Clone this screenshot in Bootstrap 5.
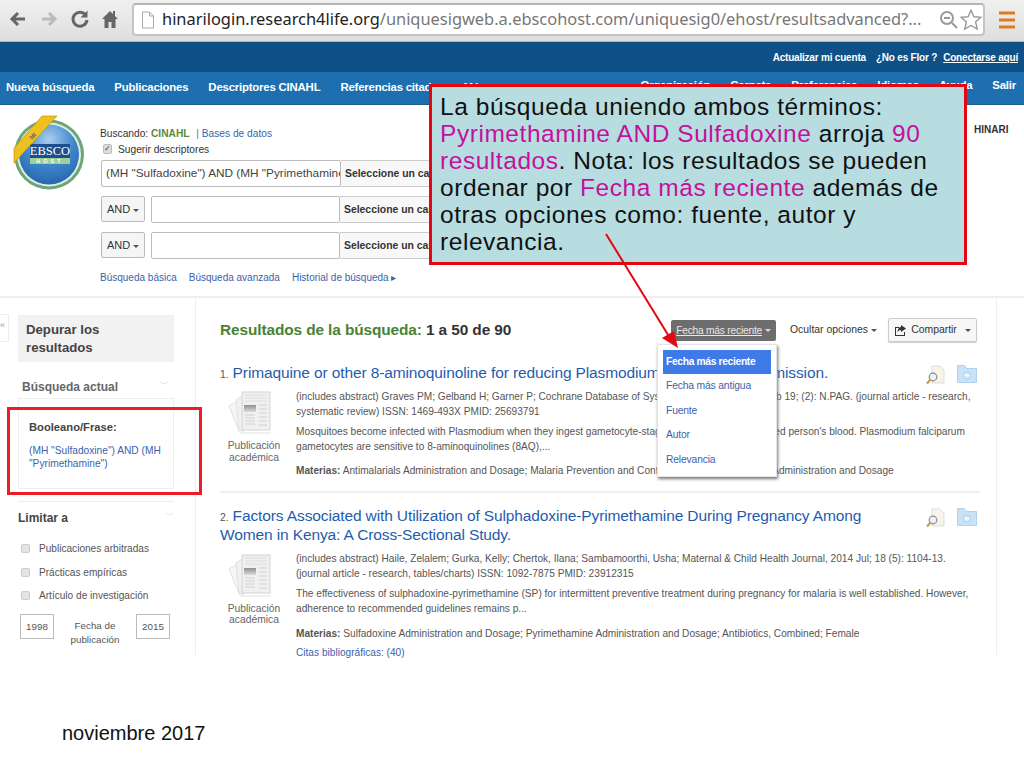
<!DOCTYPE html>
<html lang="es">
<head>
    <meta charset="UTF-8">
    <meta name="viewport" content="width=device-width, initial-scale=1.0">
    <title>Resultados de la búsqueda</title>
    <link href="https://cdn.jsdelivr.net/npm/bootstrap@5.3.0/dist/css/bootstrap.min.css" rel="stylesheet">
    <style>
        body {
            width: 1024px;
            height: 768px;
            overflow: hidden;
            background: #fff;
            font-family: "Liberation Sans", Arial, sans-serif;
            position: relative;
            color: #333;
        }

        /* browser bar */
        .chrome-bar {
            height: 42px;
            background: linear-gradient(#f0f0f0, #dedede);
            border-bottom: 1px solid #b5b5b5;
            padding: 3px 0 0 8px;
        }
        .chrome-btn { width: 31px; height: 32px; }
        .url-box {
            width: 853px;
            height: 33px;
            background: #fff;
            border: 2px solid #c4c4c4;
            border-top-color: #b5b5b5;
            border-radius: 4px;
            padding-left: 7px;
            font-family: "Noto Sans", sans-serif;
            font-size: 16.4px;
            color: #777;
            white-space: nowrap;
        }
        .url-box b { font-weight: 400; color: #222; }
        .url-text { margin-left: 7px; flex: 1; overflow: hidden; }
        .burger { margin: 8px 0 0 14px; }

        /* blue bars */
        .band-top {
            height: 30px;
            background: #0f5186;
            color: #fff;
            font-size: 10px;
            font-weight: 700;
            padding-right: 6px;
            letter-spacing: -.2px;
        }
        .band-top u { margin-left: 6px; }
        .band-top span { margin-right: 10px; }
        .band-nav {
            height: 33px;
            background: #1d6fb0;
            color: #fff;
            font-size: 11.4px;
            font-weight: 700;
            padding: 0 8px 0 6px;
            border-bottom: 1px solid #18608e;
            letter-spacing: -.2px;
        }
        .band-nav span { margin-right: 20px; }
        .nav-end { margin-left: auto; padding-bottom: 5px; }
        .band-nav .nav-end span { margin: 0 0 0 20px; }

        /* search block */
        .search-block {
            height: 193px;
            border-bottom: 2px solid #eee;
            padding: 8px 0 0 12px;
            font-size: 10.2px;
        }
        .logo-col { width: 88px; flex: none; }
        .form-col { padding-top: 13px; }
        .blue-link { color: #3c5fae; }
        .green-txt { color: #5b8a3a; font-weight: 700; }
        .suggest { margin: 0 0 3px 3px; height: 16px; }
        .mini-check {
            width: 9px;
            height: 10px;
            background: #ddd;
            border: 1px solid #bbb;
            border-radius: 2px;
            margin-right: 6px;
            flex: none;
            font-size: 8px;
            line-height: 8px;
            text-align: center;
        }
        .search-row { margin-left: 1px; }
        .row-gap { margin-top: 9px; }
        .search-input {
            height: 27px;
            border: 1px solid #bbb;
            background: #fff;
            font-size: 11.8px;
            white-space: nowrap;
            overflow: hidden;
            line-height: 25px;
            color: #444;
            border-radius: 2px;
        }
        .field-select {
            width: 170px;
            height: 27px;
            border: 1px solid #ccc;
            border-left: 0;
            background: #f8f8f8;
            font-weight: 700;
            font-size: 10.4px;
            line-height: 25px;
            padding-left: 4px;
            white-space: nowrap;
            overflow: hidden;
        }
        .and-btn {
            width: 44px;
            height: 26px;
            border: 1px solid #bbb;
            border-radius: 2px;
            background: #f5f5f5;
            font-size: 11px;
            line-height: 24px;
            padding-left: 5px;
            margin-right: 6px;
            flex: none;
        }
        .caret-down {
            display: inline-block;
            border-left: 3px solid transparent;
            border-right: 3px solid transparent;
            border-top: 3px solid #555;
            vertical-align: middle;
            margin-left: 3px;
        }
        .search-links { margin-top: 11px; gap: 12px; font-size: 10px; }
        .hinari-tag {
            position: absolute;
            left: 974px;
            top: 122px;
            font-size: 10px;
            font-weight: 700;
        }

        /* results */
        .results-wrap { height: 357px; }
        .side-col {
            width: 196px;
            flex: none;
            border-right: 1px solid #eee;
            padding: 17px 21px 0 18px;
            position: relative;
            font-size: 10.1px;
        }
        .collapse-tab {
            position: absolute;
            left: -1px;
            top: 16px;
            width: 10px;
            height: 28px;
            border: 1px solid #eee;
            font-size: 9px;
            color: #999;
            line-height: 20px;
        }
        .refine-head {
            background: #f2f2f2;
            height: 47px;
            font-size: 13.2px;
            line-height: 18px;
            font-weight: 700;
            padding: 6px 0 0 8px;
            color: #444;
        }
        .side-title { font-size: 12px; font-weight: 700; color: #666; }
        .side-current { padding: 16px 5px 0 4px; }
        .chev { color: #bbb; font-size: 9px; }
        .bool-box {
            border: 1px solid #eee;
            height: 91px;
            margin-top: 2px;
            padding: 22px 0 0 10px;
            font-size: 10.2px;
            line-height: 13px;
        }
        .bool-box strong { display: block; font-size: 11.2px; margin-bottom: 10px; color: #444; }
        .limit-box { border-top: 1px solid #eee; margin-top: 12px; padding-top: 7px; }
        .limit-box .side-title { color: #444; }
        .limit-item { margin-top: 8.6px; height: 15px; color: #555; }
        .limit-box .limit-first { margin-top: 14px; }
        .limit-item i {
            width: 9px;
            height: 9px;
            background: #e4e4e4;
            border: 1px solid #ccc;
            border-radius: 2px;
            margin: 0 9px 0 3px;
            flex: none;
        }
        .date-row { margin-top: 11px; padding: 0 4px 0 2px; text-align: center; font-size: 9.8px; line-height: 14px; color: #555; }
        .date-row b { font-weight: 400; border: 1px solid #bbb; width: 34px; height: 25px; line-height: 23px; }
        .date-label { margin-top: 5px; }

        .main-col { width: 801px; flex: none; padding: 20px 0 0 24px; border-right: 1px solid #eee; position: relative; }
        .main-head { height: 24px; width: 760px; }
        .main-head h1 { font-size: 15.4px; font-weight: 700; margin: 0; color: #333; letter-spacing: -.1px; }
        .main-head h1 span { color: #4a8136; }
        .sort-btn {
            background: #6d6d6d;
            color: #fff;
            font-size: 10.2px;
            padding: 0 5px;
            height: 21px;
            line-height: 21px;
            border-radius: 2px;
            letter-spacing: -.2px;
        }
        .sort-btn u { color: #e8e8e8; }
        .sort-btn .caret-down { border-top-color: #ddd; }
        .hide-opts { font-size: 10.4px; margin: 0 11px 0 14px; }
        .share-btn {
            width: 89px;
            height: 24px;
            border: 1px solid #ccc;
            border-radius: 2px;
            background: #f7f7f7;
            font-size: 10.4px;
            box-shadow: 0 1px 1px #ccc;
            margin-right: 3px;
        }
        .hit { width: 760px; position: relative; font-size: 10.13px; line-height: 15px; color: #555; }
        .hit h2 { font-size: 15.5px; line-height: 19.4px; font-weight: 400; margin: 0; color: #1f5cad; letter-spacing: -.12px; }
        .hit h2 small { font-size: 10.4px; color: #555; line-height: 1; }
        .hit p { margin: 0 0 5px; }
        .hit-first { margin-top: 21px; padding-bottom: 13px; border-bottom: 2px solid #eee; }
        .hit-second { margin-top: 13px; }
        .doc-col { width: 76px; flex: none; text-align: center; line-height: 11.5px; padding-right: 8px; color: #666; font-size: 10.3px; }
        .doc-col svg { display: block; margin: 9px 0 1px 6px; }
        .hit-body { margin-top: 7px; }
        .hit-second .hit-body { margin-top: 6px; }
        .hit-first .subj { margin-top: 8.5px; }
        .hit-second .subj { margin-top: 10px; }
        .hit-tools { position: absolute; right: 3px; top: 2px; gap: 11px; }

        /* overlays */
        .callout {
            position: absolute;
            left: 429px;
            top: 84px;
            width: 538px;
            height: 181px;
            background: #b7dde1;
            border: 3px solid #e30613;
            padding: 6px 0 0 8px;
            font-size: 24.5px;
            letter-spacing: .55px;
            line-height: 27px;
            color: #111;
            white-space: nowrap;
        }
        .callout span { color: #c4119c; }
        .box-mark {
            position: absolute;
            left: 7px;
            top: 407px;
            width: 195px;
            height: 88px;
            border: 3px solid #ee1c25;
        }
        .sort-menu {
            position: absolute;
            left: 657px;
            top: 344px;
            width: 120px;
            height: 133px;
            background: #fff;
            border: 1px solid #e4e4e4;
            box-shadow: 1px 2px 3px #777;
            padding: 5px 5px 0;
            font-size: 10.3px;
            color: #3c5fae;
            letter-spacing: -.15px;
        }
        .sort-menu div { height: 24.4px; line-height: 24px; padding-left: 3px; }
        .sort-menu .on { background: #3f7be8; color: #fff; font-weight: 700; letter-spacing: -.35px; }
        .arrow-line { position: absolute; left: 600px; top: 230px; }
        .date-note { position: absolute; left: 62px; top: 722px; font-size: 20px; line-height: 23px; color: #111; }
        .icon-defs { position: absolute; width: 0; height: 0; }
    </style>
</head>
<body>
    <!-- shared result icons -->
    <svg class="icon-defs">
        <defs>
            <linearGradient id="sheetBlock" x1="0" y1="0" x2="0" y2="1"><stop offset="0" stop-color="#8f8f8f"/><stop offset="1" stop-color="#dcdcdc"/></linearGradient>
            <radialGradient id="logoBlue" cx=".5" cy=".25" r=".85"><stop offset="0" stop-color="#a9cdee"/><stop offset=".5" stop-color="#3f86c9"/><stop offset="1" stop-color="#1f5ea8"/></radialGradient>
            <symbol id="docIcon" viewBox="0 0 50 48">
                <path d="M3 15 14 9l9 27-10 4z" fill="#f6f6f6" stroke="#e2e2e2"/>
                <path d="M10 9 18 4v36h-5z" fill="#f1f1f1" stroke="#e0e0e0"/>
                <rect x="16" y="1" width="28" height="38" fill="#f0f0f0" stroke="#d4d4d4"/>
                <path d="M19 4h22M19 7h22M19 10h22" stroke="#dedede"/>
                <rect x="18" y="14" width="12" height="7" fill="url(#sheetBlock)"/>
                <path d="M19 24h10M19 27h10M19 30h10M19 33h10M33 14h8M33 18h8M33 22h8M33 26h8M33 30h8M33 34h8" stroke="#e0e0e0" stroke-width="2"/>
                <rect x="14" y="41" width="31" height="2" fill="#f0f0f0"/>
            </symbol>
            <symbol id="viewIcon" viewBox="0 0 20 20">
                <path d="M6 1h8l4 4v13H6z" fill="#f7f4ea" stroke="#ddd"/>
                <circle cx="7" cy="12" r="3.800" fill="#eef2fa" stroke="#8d8d80" stroke-width="1.200"/>
                <path d="M4 15 1 18.500" stroke="#c4a040" stroke-width="2.200"/>
            </symbol>
            <symbol id="folderIcon" viewBox="0 0 20 18">
                <path d="M.5 .5h7l2 3h10v14H.5z" fill="#c9e2f8" stroke="#aed2f2"/>
                <circle cx="10" cy="10.500" r="3.500" fill="#dcecfa" stroke="#a9cfee"/>
                <path d="M7.500 10.500h5" stroke="#f4faff" stroke-width="1.500"/>
            </symbol>
        </defs>
    </svg>

    <!-- browser chrome -->
    <div class="chrome-bar d-flex">
        <div class="chrome-btn d-flex align-items-center">
            <svg width="20" height="18" viewBox="0 0 20 18"><path d="M17 9H4M10 3 4 9l6 6" fill="none" stroke="#666" stroke-width="3"/></svg>
        </div>
        <div class="chrome-btn d-flex align-items-center">
            <svg width="20" height="18" viewBox="0 0 20 18"><path d="M3 9h13M10 3l6 6-6 6" fill="none" stroke="#bbb" stroke-width="3"/></svg>
        </div>
        <div class="chrome-btn d-flex align-items-center">
            <svg width="20" height="20" viewBox="0 0 20 20"><path d="M16 6.500A7 7 0 1 0 17 11" fill="none" stroke="#666" stroke-width="3"/><path d="M17.500 1.500v7h-7z" fill="#666"/></svg>
        </div>
        <div class="chrome-btn d-flex align-items-center">
            <svg width="18" height="20" viewBox="0 0 18 20"><path d="M9 2 1 10h2.500v9h4v-6h3v6h4v-9H17l-3-3V2h-2v3z" fill="#666"/></svg>
        </div>
        <div class="url-box d-flex align-items-center">
            <svg width="14" height="18" viewBox="0 0 14 18"><path d="M1.500 1h7l4 4v12h-11zM8.500 1v4h4" fill="#fff" stroke="#aaa"/></svg>
            <div class="url-text"><b>hinarilogin.research4life.org</b>/uniquesigweb.a.ebscohost.com/uniquesig0/ehost/resultsadvanced?...</div>
            <svg width="20" height="20" viewBox="0 0 20 20"><circle cx="8" cy="8" r="6" fill="none" stroke="#999" stroke-width="2"/><path d="M5 8h6M13 13l5 5" stroke="#999" stroke-width="2"/></svg>
            <svg width="24" height="24" viewBox="0 0 22 22"><path d="m11 2 2.700 6 6.300.6-4.800 4.200 1.500 6.500L11 16l-5.700 3.300 1.500-6.500L2 8.600 8.300 8z" fill="#fff" stroke="#999" stroke-width="1.300"/></svg>
        </div>
        <div class="burger">
            <svg class="d-block" width="16" height="18" viewBox="0 0 16 18"><path d="M0 2h16M0 9h16M0 16h16" stroke="#e07b1a" stroke-width="3"/></svg>
        </div>
    </div>

    <!-- blue bars -->
    <div class="band-top d-flex align-items-center justify-content-end">
        <span>Actualizar mi cuenta</span>¿No es Flor ? <u>Conectarse aquí</u>
    </div>
    <div class="band-nav d-flex align-items-center">
        <span>Nueva búsqueda</span>
        <span>Publicaciones</span>
        <span>Descriptores CINAHL</span>
        <span>Referencias citadas</span>
        <span>Más</span>
        <div class="nav-end d-flex">
            <span>Organización</span>
            <span>Carpeta</span>
            <span>Preferencias</span>
            <span>Idiomas</span>
            <span>Ayuda</span>
            <span>Salir</span>
        </div>
    </div>

    <!-- search -->
    <div class="search-block d-flex">
        <div class="logo-col">
            <svg width="72" height="80" viewBox="0 0 72 80">
                <circle cx="37" cy="41.500" r="35" fill="#6da578"/>
                <circle cx="37" cy="41.500" r="32" fill="#dfeee0"/>
                <circle cx="37" cy="41.500" r="30" fill="url(#logoBlue)"/>
                <rect x="18" y="31" width="40" height="14" fill="#1c4f8c"/>
                <rect x="18" y="45" width="40" height="6" fill="#9fcf94"/>
                <path d="M2 35 30 3h15L2 50z" fill="#efc11f" stroke="#b58e10" stroke-width=".6"/>
                <text x="20" y="27" font-family="Liberation Sans, sans-serif" font-size="6" font-weight="700" fill="#665" transform="rotate(-45 20 27)">MI</text>
                <text x="38" y="42" text-anchor="middle" font-family="Liberation Serif, serif" font-size="12.500" fill="#fff">EBSCO</text>
                <text x="38" y="50" text-anchor="middle" font-family="Liberation Sans, sans-serif" font-size="5.500" font-weight="700" letter-spacing="3" fill="#fff">HOST</text>
            </svg>
        </div>
        <div class="form-col">
            <div>Buscando: <span class="green-txt">CINAHL</span> <span class="text-secondary ms-1">|</span> <span class="blue-link">Bases de datos</span></div>
            <div class="suggest d-flex align-items-center"><span class="mini-check">✓</span>Sugerir descriptores</div>
            <div class="search-row d-flex">
                <div class="search-input px-1" style="width:240px">(MH "Sulfadoxine") AND (MH "Pyrimethamine")</div>
                <div class="field-select">Seleccione un campo (opcional)</div>
            </div>
            <div class="search-row row-gap d-flex">
                <div class="and-btn">AND<span class="caret-down"></span></div>
                <div class="search-input" style="width:189px"></div>
                <div class="field-select">Seleccione un campo (opcional)</div>
            </div>
            <div class="search-row row-gap d-flex">
                <div class="and-btn">AND<span class="caret-down"></span></div>
                <div class="search-input" style="width:189px"></div>
                <div class="field-select">Seleccione un campo (opcional)</div>
            </div>
            <div class="search-links d-flex blue-link">
                <span>Búsqueda básica</span>
                <span>Búsqueda avanzada</span>
                <span>Historial de búsqueda ▸</span>
            </div>
        </div>
    </div>
    <div class="hinari-tag">HINARI</div>

    <!-- results -->
    <div class="results-wrap d-flex">
        <div class="side-col">
            <div class="collapse-tab">«</div>
            <div class="refine-head">Depurar los<br>resultados</div>
            <div class="side-current">
                <div class="d-flex justify-content-between"><span class="side-title">Búsqueda actual</span><span class="chev">﹀</span></div>
            </div>
            <div class="bool-box">
                <strong>Booleano/Frase:</strong>
                <span class="blue-link">(MH "Sulfadoxine") AND (MH<br>"Pyrimethamine")</span>
            </div>
            <div class="limit-box">
                <div class="d-flex justify-content-between"><span class="side-title">Limitar a</span><span class="chev">﹀</span></div>
                <div class="limit-item limit-first d-flex align-items-center"><i></i>Publicaciones arbitradas</div>
                <div class="limit-item d-flex align-items-center"><i></i>Prácticas empíricas</div>
                <div class="limit-item d-flex align-items-center"><i></i>Artículo de investigación</div>
                <div class="date-row d-flex justify-content-between align-items-start">
                    <b>1998</b>
                    <span class="date-label">Fecha de<br>publicación</span>
                    <b>2015</b>
                </div>
            </div>
        </div>

        <div class="main-col">
            <div class="main-head d-flex align-items-center">
                <h1 class="flex-grow-1"><span>Resultados de la búsqueda:</span> 1 a 50 de 90</h1>
                <div class="sort-btn"><u>Fecha más reciente</u><span class="caret-down"></span></div>
                <div class="hide-opts">Ocultar opciones<span class="caret-down"></span></div>
                <div class="share-btn d-flex align-items-center justify-content-center">
                    <svg width="13" height="12" viewBox="0 0 13 12" class="me-1"><path d="M1 3h4v1H2v7h8V8h1v4H1z" fill="#333"/><path d="M7 1l5 3.500L7 8V6C5 6 4 7 3.500 8.500 3.500 5 5 3 7 3z" fill="#333"/></svg>
                    Compartir<span class="caret-down ms-2"></span>
                </div>
            </div>

            <div class="hit hit-first">
                <h2><small>1.</small> Primaquine or other 8-aminoquinoline for reducing Plasmodium falciparum transmission.</h2>
                <div class="hit-tools d-flex">
                    <svg width="20" height="20"><use href="#viewIcon"/></svg>
                    <svg width="20" height="18"><use href="#folderIcon"/></svg>
                </div>
                <div class="d-flex">
                    <div class="doc-col">
                        <svg width="50" height="48"><use href="#docIcon"/></svg>
                        Publicación académica
                    </div>
                    <div class="hit-body flex-grow-1">
                        <p>(includes abstract) Graves PM; Gelband H; Garner P; Cochrane Database of Systematic Reviews, 2015 Feb 19; (2): N.PAG. (journal article - research,<br>systematic review) ISSN: 1469-493X PMID: 25693791</p>
                        <p>Mosquitoes become infected with Plasmodium when they ingest gametocyte-stage parasites from an infected person's blood. Plasmodium falciparum<br>gametocytes are sensitive to 8-aminoquinolines (8AQ),...</p>
                        <p class="subj mb-0"><strong>Materias:</strong> Antimalarials Administration and Dosage; Malaria Prevention and Control; Humans; Primaquine Administration and Dosage</p>
                    </div>
                </div>
            </div>

            <div class="hit hit-second">
                <h2><small>2.</small> Factors Associated with Utilization of Sulphadoxine-Pyrimethamine During Pregnancy Among<br>Women in Kenya: A Cross-Sectional Study.</h2>
                <div class="hit-tools d-flex">
                    <svg width="20" height="20"><use href="#viewIcon"/></svg>
                    <svg width="20" height="18"><use href="#folderIcon"/></svg>
                </div>
                <div class="d-flex">
                    <div class="doc-col">
                        <svg width="50" height="48"><use href="#docIcon"/></svg>
                        Publicación académica
                    </div>
                    <div class="hit-body flex-grow-1">
                        <p>(includes abstract) Haile, Zelalem; Gurka, Kelly; Chertok, Ilana; Sambamoorthi, Usha; Maternal &amp; Child Health Journal, 2014 Jul; 18 (5): 1104-13.<br>(journal article - research, tables/charts) ISSN: 1092-7875 PMID: 23912315</p>
                        <p>The effectiveness of sulphadoxine-pyrimethamine (SP) for intermittent preventive treatment during pregnancy for malaria is well established. However,<br>adherence to recommended guidelines remains p...</p>
                        <p class="subj mb-0"><strong>Materias:</strong> Sulfadoxine Administration and Dosage; Pyrimethamine Administration and Dosage; Antibiotics, Combined; Female</p>
                        <p class="mt-1 mb-0 blue-link">Citas bibliográficas: (40)</p>
                    </div>
                </div>
            </div>
        </div>
    </div>

    <!-- annotations on top of the screenshot -->
    <div class="sort-menu">
        <div class="on">Fecha más reciente</div>
        <div>Fecha más antigua</div>
        <div>Fuente</div>
        <div>Autor</div>
        <div>Relevancia</div>
    </div>
    <div class="box-mark"></div>
    <div class="callout">
        La búsqueda uniendo ambos términos:<br>
        <span>Pyrimethamine AND Sulfadoxine</span> arroja <span>90</span><br>
        <span>resultados</span>. Nota: los resultados se pueden<br>
        ordenar por <span>Fecha más reciente</span> además de<br>
        otras opciones como: fuente, autor y<br>
        relevancia.
    </div>
    <svg class="arrow-line" width="90" height="120" viewBox="0 0 90 120">
        <path d="M6 4 70 108" stroke="#e30613" stroke-width="2" fill="none"/>
        <path d="M78 118 62 108l12-7z" fill="#e30613"/>
    </svg>
    <div class="date-note">noviembre 2017</div>

    <script src="https://cdn.jsdelivr.net/npm/bootstrap@5.3.0/dist/js/bootstrap.bundle.min.js"></script>
</body>
</html>
